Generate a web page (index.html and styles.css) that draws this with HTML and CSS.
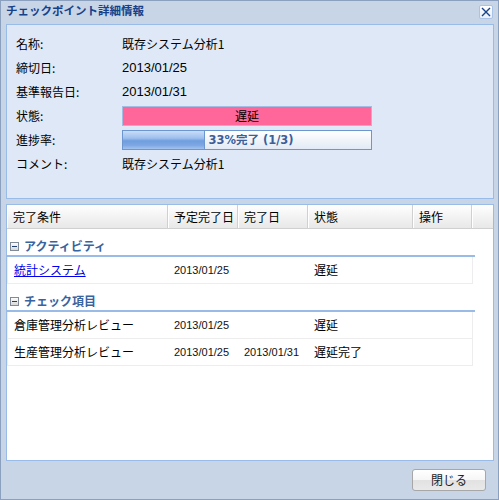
FILE: index.html
```html
<!DOCTYPE html>
<html lang="ja">
<head>
<meta charset="utf-8">
<link rel="stylesheet" href="styles.css">
</head>
<body>
<div class="win">
  <div class="win-head">
    <span class="win-title">チェックポイント詳細情報</span>
    <span class="win-close"><svg width="10" height="10" viewBox="0 0 10 10"><path d="M1 1L9 9M9 1L1 9" stroke="#15428b" stroke-width="1.4" fill="none"/></svg></span>
  </div>
  <div class="win-body">
    <div class="form-panel">
      <div class="frow"><span class="flabel">名称:</span><span class="fval">既存システム分析1</span></div>
      <div class="frow"><span class="flabel">締切日:</span><span class="fval date">2013/01/25</span></div>
      <div class="frow"><span class="flabel">基準報告日:</span><span class="fval date">2013/01/31</span></div>
      <div class="frow"><span class="flabel">状態:</span><div class="status">遅延</div></div>
      <div class="frow"><span class="flabel">進捗率:</span><div class="progress"><div class="progress-fill" style="width:82px"></div><span class="progress-text">33%完了 (1/3)</span></div></div>
      <div class="frow"><span class="flabel">コメント:</span><span class="fval">既存システム分析1</span></div>
    </div>
    <div class="grid-panel">
      <div class="grid-head">
        <div class="hc h1">完了条件</div>
        <div class="hc h2">予定完了日</div>
        <div class="hc h3">完了日</div>
        <div class="hc h4">状態</div>
        <div class="hc h5">操作</div>
        <div class="hc hfill"></div>
      </div>
      <div class="grid-body">
        <div class="group"><svg class="gicon" width="9" height="9" viewBox="0 0 9 9"><defs><linearGradient id="g" x1="0" y1="0" x2="0" y2="1"><stop offset="0" stop-color="#ffffff"/><stop offset="1" stop-color="#d6d6d6"/></linearGradient></defs><rect x="0.5" y="0.5" width="8" height="8" fill="url(#g)" stroke="#808a99"/><path d="M2 4.5H7" stroke="#1f3f70" stroke-width="1"/></svg><span>アクティビティ</span></div>
        <div class="row">
          <div class="cell c1"><a class="link" href="#">統計システム</a></div>
          <div class="cell c2 gdate">2013/01/25</div>
          <div class="cell c3 gdate"></div>
          <div class="cell c4">遅延</div>
          <div class="cell c5"></div>
        </div>
        <div class="group"><svg class="gicon" width="9" height="9" viewBox="0 0 9 9"><rect x="0.5" y="0.5" width="8" height="8" fill="url(#g)" stroke="#808a99"/><path d="M2 4.5H7" stroke="#1f3f70" stroke-width="1"/></svg><span>チェック項目</span></div>
        <div class="row">
          <div class="cell c1">倉庫管理分析レビュー</div>
          <div class="cell c2 gdate">2013/01/25</div>
          <div class="cell c3 gdate"></div>
          <div class="cell c4">遅延</div>
          <div class="cell c5"></div>
        </div>
        <div class="row">
          <div class="cell c1">生産管理分析レビュー</div>
          <div class="cell c2 gdate">2013/01/25</div>
          <div class="cell c3 gdate">2013/01/31</div>
          <div class="cell c4">遅延完了</div>
          <div class="cell c5"></div>
        </div>
      </div>
    </div>
  </div>
  <div class="win-foot"><button class="btn">閉じる</button></div>
</div>
</body>
</html>
```
FILE: styles.css
```css
* { box-sizing: border-box; }
html, body { margin: 0; padding: 0; }
body {
  font-family: "Noto Sans CJK JP", sans-serif;
  font-size: 12px;
  color: #000;
  background: #fff;
}
.win {
  width: 499px;
  height: 500px;
  border: 1px solid #8b9fbf;
  background: #c8d5e6;
  display: flex;
  flex-direction: column;
}
.win-head {
  height: 23px;
  display: flex;
  justify-content: space-between;
  align-items: flex-start;
  padding: 0 5px 0 5px;
}
.win-title {
  font-weight: bold;
  font-size: 11.5px;
  line-height: 19px;
  color: #15428b;
}
.win-close {
  margin-top: 4px;
  width: 14px;
  height: 14px;
  border: 1px solid #a9c3e6;
  border-radius: 2px;
  background: linear-gradient(#ffffff, #e6eef9);
  display: flex;
  align-items: center;
  justify-content: center;
}
.win-body {
  padding: 0 4px 0 5px;
  display: flex;
  flex-direction: column;
}
.form-panel {
  height: 175px;
  border: 1px solid #99bbe8;
  background: #dfe8f6;
  padding: 7px 0 0 9px;
  margin-bottom: 5px;
}
.frow {
  height: 24px;
  display: flex;
  align-items: center;
}
.flabel {
  width: 106px;
  line-height: 16px;
}
.fval { line-height: 16px; }
.date {
  font-family: "Liberation Sans", sans-serif;
  font-size: 13px;
}
.status {
  width: 250px;
  height: 20px;
  background: #ff6699;
  border: 1px solid #a3bde3;
  text-align: center;
  line-height: 18px;
}
.progress {
  width: 250px;
  height: 20px;
  border: 1px solid #6b96cf;
  background: linear-gradient(#ffffff, #e2eaf5);
  display: grid;
}
.progress-fill {
  grid-area: 1 / 1;
  height: 18px;
  background: linear-gradient(#c9ddf7 0%, #9dbfee 40%, #6f9ddf 55%, #7ea8e4 80%, #a3c3ef 100%);
  border-right: 1px solid #6b96cf;
}
.progress-text {
  grid-area: 1 / 1;
  text-align: center;
  line-height: 18px;
  font-family: "DejaVu Sans", "Noto Sans CJK JP", sans-serif;
  font-weight: bold;
  font-size: 11.5px;
  color: #3a5f99;
  padding-left: 8px;
}
.grid-panel {
  height: 257px;
  border: 1px solid #99bbe8;
  background: #fff;
}
.grid-head {
  height: 24px;
  display: flex;
  border-bottom: 1px solid #d0d0d0;
  background: linear-gradient(#ffffff, #f3f3f3 50%, #e8e8e8);
}
.hc {
  height: 23px;
  line-height: 23px;
  padding-left: 6px;
  border-right: 1px solid #d0d0d0;
  box-shadow: inset 1px 0 0 #ffffff;
}
.h1 { width: 161px; }
.h2 { width: 70px; }
.h3 { width: 70px; }
.h4 { width: 105px; }
.h5 { width: 59px; }
.hfill { flex: 1; border-right: none; }
.group {
  width: 468px;
  height: 28px;
  padding: 8px 0 0 3px;
  border-bottom: 2px solid #99bbe8;
  display: flex;
  align-items: center;
  gap: 5px;
  height: 28px;
  line-height: 16px;
}
.group span {
  font-weight: bold;
  color: #3764a0;
}
.gicon { flex: none; }
.row {
  width: 466px;
  height: 27px;
  display: flex;
  border-left: 1px solid #ededed;
  border-right: 1px solid #ededed;
  border-bottom: 1px solid #ededed;
}
.cell {
  line-height: 26px;
  padding-left: 6px;
  white-space: nowrap;
  overflow: hidden;
}
.c1 { width: 160px; }
.c2 { width: 70px; }
.c3 { width: 70px; }
.c4 { width: 105px; }
.c5 { width: 59px; }
.gdate {
  font-family: "Liberation Sans", sans-serif;
  font-size: 11px;
  color: #111;
}
.link {
  color: #0000ee;
  text-decoration: underline;
}
.win-foot {
  flex: 1;
  display: flex;
  justify-content: flex-end;
  align-items: flex-start;
  padding: 8px 12px 0 0;
}
.btn {
  width: 74px;
  height: 22px;
  border: 1px solid #a7a7a7;
  border-radius: 3px;
  background: linear-gradient(#ffffff 0%, #f6f6f6 50%, #e2e2e2 51%, #e9e9e9 100%);
  font-family: "Noto Sans CJK JP", sans-serif;
  font-size: 12px;
  color: #222;
  padding: 0;
  line-height: 20px;
}
```
